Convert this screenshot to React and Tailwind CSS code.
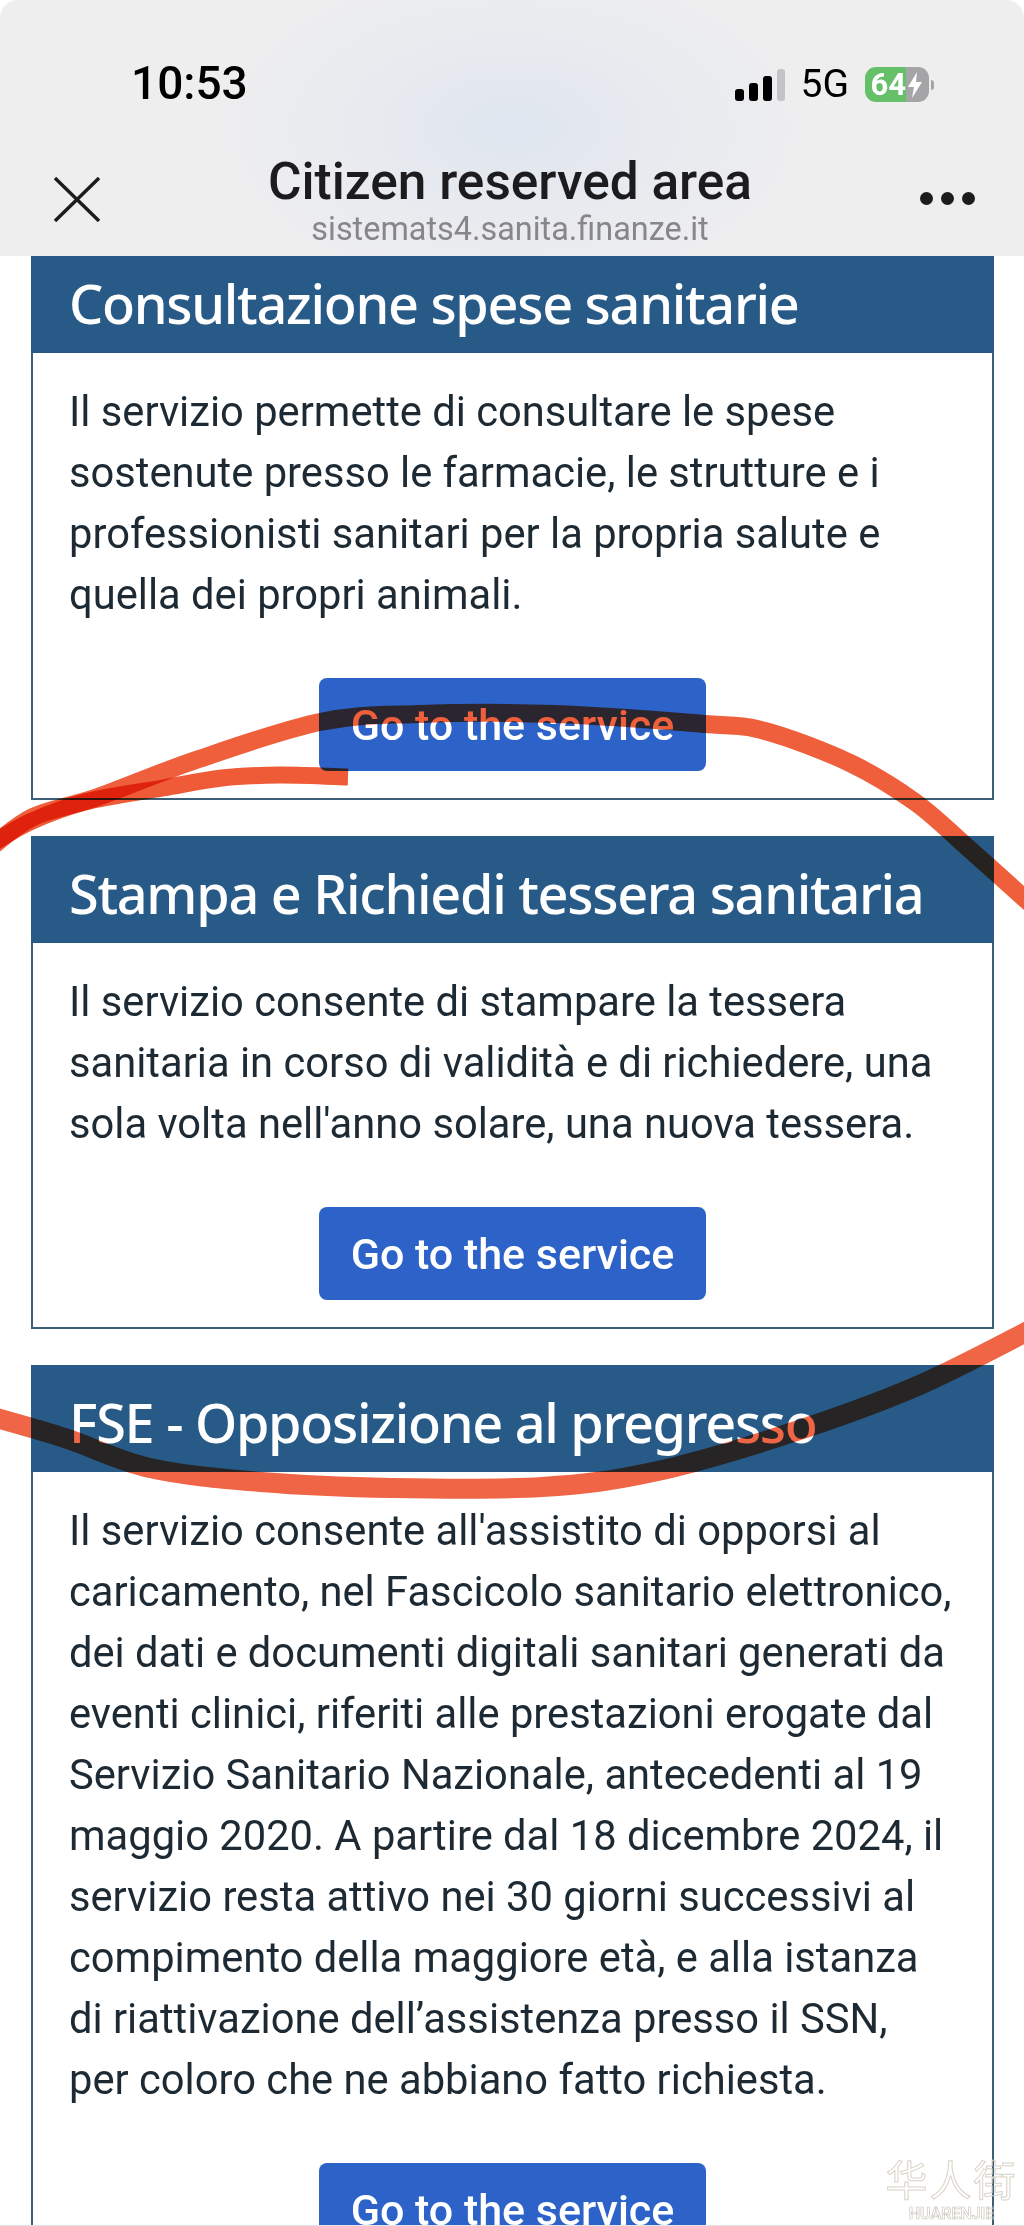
const SANS = "font-['Roboto','Liberation_Sans',sans-serif]";

function smooth(pts) {
  let d = `M${pts[0][0]} ${pts[0][1]}`;
  for (let i = 0; i < pts.length - 1; i++) {
    const p0 = pts[i - 1] || pts[i];
    const p1 = pts[i];
    const p2 = pts[i + 1];
    const p3 = pts[i + 2] || p2;
    const c1x = p1[0] + (p2[0] - p0[0]) / 6;
    const c1y = p1[1] + (p2[1] - p0[1]) / 6;
    const c2x = p2[0] - (p3[0] - p1[0]) / 6;
    const c2y = p2[1] - (p3[1] - p1[1]) / 6;
    d += ` C${c1x} ${c1y} ${c2x} ${c2y} ${p2[0]} ${p2[1]}`;
  }
  return d;
}

const strokeA = [[348, 777], [280, 775], [222, 778], [163, 788], [85, 802], [30, 822], [-10, 845]];
const strokeB = [[-10, 848], [33, 817], [98, 797], [196, 760], [320, 722], [418, 714], [555, 714], [705, 724], [765, 731], [850, 763], [915, 802], [967, 847], [1034, 907]];
const strokeC = [[-10, 1416], [65, 1438], [150, 1468], [261, 1482], [392, 1488], [542, 1487], [653, 1472], [784, 1435], [915, 1387], [1034, 1328]];

const cards = [
  {
    title: "Consultazione spese sanitarie",
    lines: [
      "Il servizio permette di consultare le spese",
      "sostenute presso le farmacie, le strutture e i",
      "professionisti sanitari per la propria salute e",
      "quella dei propri animali.",
    ],
  },
  {
    title: "Stampa e Richiedi tessera sanitaria",
    lines: [
      "Il servizio consente di stampare la tessera",
      "sanitaria in corso di validità e di richiedere, una",
      "sola volta nell'anno solare, una nuova tessera.",
    ],
  },
  {
    title: "FSE - Opposizione al pregresso",
    lines: [
      "Il servizio consente all'assistito di opporsi al",
      "caricamento, nel Fascicolo sanitario elettronico,",
      "dei dati e documenti digitali sanitari generati da",
      "eventi clinici, riferiti alle prestazioni erogate dal",
      "Servizio Sanitario Nazionale, antecedenti al 19",
      "maggio 2020. A partire dal 18 dicembre 2024, il",
      "servizio resta attivo nei 30 giorni successivi al",
      "compimento della maggiore età, e alla istanza",
      "di riattivazione dell’assistenza presso il SSN,",
      "per coloro che ne abbiano fatto richiesta.",
    ],
  },
];

function Card({ title, lines }) {
  return (
    <section className="border-x-2 border-b-2 border-[#3d6079] bg-white">
      <h2 className="-mx-[2px] flex h-[107px] items-center bg-[#285a87] pl-[38px] pt-[7px] font-['Noto_Sans',sans-serif] text-[54px] font-medium leading-none tracking-[-1.3px] text-white whitespace-nowrap [font-stretch:condensed]">
        {title}
      </h2>
      <div className="px-[36px] pt-[28px] pb-[27px]">
        <p className="whitespace-nowrap text-[41.7px] leading-[61px] text-[#1d2a33]">
          {lines.map((l) => (
            <span key={l} className="block">{l}</span>
          ))}
        </p>
        <div className="mt-[53px] flex justify-center">
          <button className="flex h-[93px] w-[387px] items-center justify-center rounded-[8px] bg-[#2d63c8] pt-[2px] text-[43px] font-medium text-white">
            Go to the service
          </button>
        </div>
      </div>
    </section>
  );
}

function StatusIcons() {
  return (
    <div className="flex items-center">
      <div className="flex items-end gap-[5px]">
        <span className="h-[12px] w-[9px] rounded-[3px] bg-black" />
        <span className="h-[18px] w-[9px] rounded-[3px] bg-black" />
        <span className="h-[25px] w-[9px] rounded-[3px] bg-black" />
        <span className="h-[32px] w-[8px] rounded-[3px] bg-[#c3c3c6]" />
      </div>
      <span className="ml-[16px] text-[39px] leading-none text-black">5G</span>
      <div className="ml-[16px] flex h-[35px] w-[64px] overflow-hidden rounded-[11px]">
        <div className="flex w-[41px] items-center justify-end bg-[#66bf69] text-[31px] font-bold leading-none text-white">64</div>
        <div className="flex flex-1 items-center bg-[#a5a5a7]">
          <svg width="18" height="28" viewBox="0 0 18 28" fill="#fff">
            <path d="M11 1 L2 16 H8 L6 27 L16 11 H10 Z" />
          </svg>
        </div>
      </div>
      <span className="ml-[2px] h-[10px] w-[3px] rounded-r-full bg-[#a5a5a7]" />
    </div>
  );
}

export default function App() {
  return (
    <div className={`relative h-[2226px] w-[1024px] overflow-hidden border-b border-[#e4e4e4] bg-white ${SANS}`}>
      <header className="relative z-10 h-[256px] rounded-t-[18px] bg-[radial-gradient(ellipse_300px_170px_at_50%_50%,#dfe6ef_0%,#e9ebef_60%,#eeeeef_100%)]">
        <div className="flex h-[166px] items-start justify-between pl-[131px] pr-[90px] pt-[58px]">
          <span className="text-[46px] font-medium leading-[50px] text-black">10:53</span>
          <div className="pt-[7px]"><StatusIcons /></div>
        </div>
        <div className="flex items-start justify-between pl-[54px] pr-[49px]">
          <svg className="mt-[11px]" width="46" height="45" viewBox="0 0 46 45" fill="none" stroke="#1c1c1e" strokeWidth="3.4">
            <path d="M1 1 L45 44 M45 1 L1 44" />
          </svg>
          <div className="-mt-[12px] flex flex-col items-center">
            <span className="text-[51.4px] font-medium leading-[56px] text-[#1c1c1e]">Citizen reserved area</span>
            <span className="text-[32.4px] leading-[38px] text-[#87878b]">sistemats4.sanita.finanze.it</span>
          </div>
          <div className="mt-[26px] flex gap-[8px]">
            <span className="size-[13px] rounded-full bg-[#1c1c1e]" />
            <span className="size-[13px] rounded-full bg-[#1c1c1e]" />
            <span className="size-[13px] rounded-full bg-[#1c1c1e]" />
          </div>
        </div>
      </header>

      <main className="-mt-[10px] flex flex-col gap-[36px] pl-[31px] pr-[30px]">
        {cards.map((c) => (
          <Card key={c.title} {...c} />
        ))}
      </main>

      <svg className="pointer-events-none absolute inset-0 z-20 mix-blend-multiply" width="1024" height="2226" viewBox="0 0 1024 2226" fill="none">
        <path className="mix-blend-multiply" d={smooth(strokeA)} stroke="#ee5b36" strokeWidth="17" />
        <path className="mix-blend-multiply" d={smooth(strokeB)} stroke="#ef5f3b" strokeWidth="18" />
        <path d={smooth(strokeC)} stroke="#ef6546" strokeWidth="20" />
      </svg>

      <div className="pointer-events-none absolute left-[879px] top-[2152px] z-20 flex w-[145px] flex-col items-center">
        <span className="font-['Noto_Sans_CJK_SC',sans-serif] text-[42px] leading-[52px] tracking-[2px] text-transparent [-webkit-text-stroke:1px_#d9d2c6]">华人街</span>
        <span className="mt-[2px] text-[16px] font-bold leading-none text-transparent [-webkit-text-stroke:0.7px_#cfc9bf]">HUARENJIE</span>
      </div>
    </div>
  );
}
